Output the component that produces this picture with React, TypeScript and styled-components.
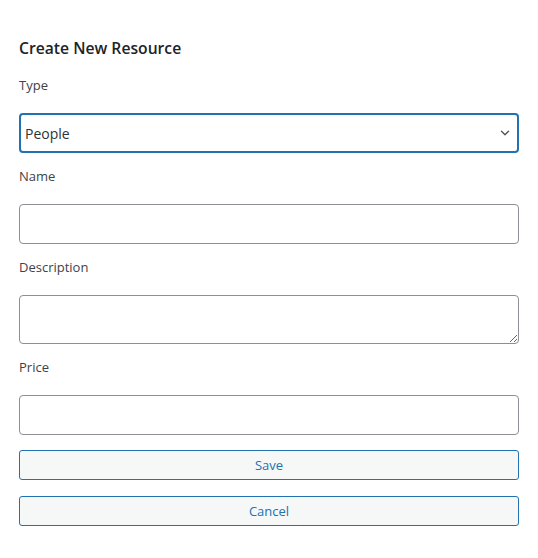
import styled, { createGlobalStyle } from "styled-components";

const GlobalStyle = createGlobalStyle`
  html, body {
    margin: 0;
    padding: 0;
    background: #fff;
  }
  body {
    font-family: "Open Sans", "Noto Sans", "Liberation Sans", sans-serif;
    color: #3c434a;
  }
`;

const FIELDS = [
  { key: "name", label: "Name", kind: "input" },
  { key: "description", label: "Description", kind: "textarea" },
  { key: "price", label: "Price", kind: "input" },
] as const;

const ChevronDown = () => (
  <svg width="14" height="14" viewBox="0 0 20 20" aria-hidden="true">
    <path
      d="M5 7.5l5 5 5-5"
      fill="none"
      stroke="#50575e"
      strokeWidth="2"
      strokeLinecap="round"
      strokeLinejoin="round"
    />
  </svg>
);

export default function App() {
  return (
    <>
      <GlobalStyle />
      <Form onSubmit={(e) => e.preventDefault()}>
        <Title>Create New Resource</Title>

        <Field>
          <Label htmlFor="type">Type</Label>
          <SelectWrap>
            <Select id="type" defaultValue="people">
              <option value="people">People</option>
              <option value="equipment">Equipment</option>
              <option value="room">Room</option>
            </Select>
            <SelectArrow>
              <ChevronDown />
            </SelectArrow>
          </SelectWrap>
        </Field>

        {FIELDS.map((f) => (
          <Field key={f.key}>
            <Label htmlFor={f.key}>{f.label}</Label>
            {f.kind === "textarea" ? (
              <TextArea id={f.key} rows={2} />
            ) : (
              <Input id={f.key} type="text" />
            )}
          </Field>
        ))}

        <Actions>
          <Button type="submit">Save</Button>
          <Button type="button">Cancel</Button>
        </Actions>
      </Form>
    </>
  );
}

const Form = styled.form`
  width: 500px;
  padding: 36px 19px 0;
  display: flex;
  flex-direction: column;
`;

const Title = styled.h2`
  margin: 0 0 16px;
  font-size: 15.7px;
  font-weight: 600;
  line-height: 24px;
  color: #1d2327;
`;

const Field = styled.div`
  display: flex;
  flex-direction: column;
  gap: 18px;
  margin-bottom: 14px;
`;

const Label = styled.label`
  font-size: 13px;
  line-height: 19px;
  color: #3c434a;
`;

const controlBase = `
  box-sizing: border-box;
  width: 100%;
  margin: 0;
  font-family: inherit;
  font-size: 14px;
  color: #2c3338;
  background: #fff;
  border: 1px solid #8c8f94;
  border-radius: 4px;
  outline: none;
`;

const Input = styled.input`
  ${controlBase}
  height: 40px;
  padding: 0 8px;
`;

const TextArea = styled.textarea`
  ${controlBase}
  height: 49px;
  padding: 6px 8px;
  resize: vertical;
  display: block;
`;

const SelectWrap = styled.div`
  position: relative;
`;

const Select = styled.select`
  ${controlBase}
  height: 40px;
  padding: 0 32px 0 4px;
  border: 2px solid #2271b1;
  appearance: none;
  cursor: pointer;
`;

const SelectArrow = styled.span`
  position: absolute;
  right: 7px;
  top: 13px;
  display: flex;
  pointer-events: none;
`;

const Actions = styled.div`
  display: flex;
  flex-direction: column;
  gap: 16px;
  margin-top: 1px;
`;

const Button = styled.button`
  box-sizing: border-box;
  width: 100%;
  height: 30px;
  margin: 0;
  font-family: inherit;
  font-size: 13px;
  color: #2271b1;
  background: #f6f7f7;
  border: 1px solid #2271b1;
  border-radius: 3px;
  cursor: pointer;
`;
